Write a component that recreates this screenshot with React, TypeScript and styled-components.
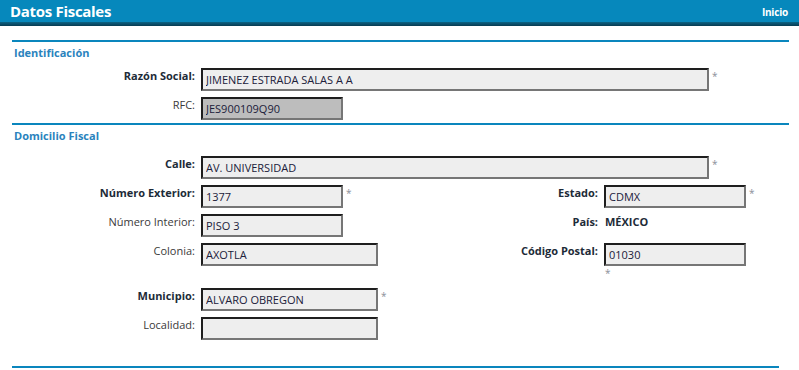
import React from "react";
import styled, { createGlobalStyle } from "styled-components";

const Global = createGlobalStyle`
  html, body { margin: 0; padding: 0; background: #ffffff; }
  body { font-family: "Open Sans", "DejaVu Sans", sans-serif; font-size: 11px; color: #333; }
`;

const Page = styled.div`
  width: 799px;
  height: 370px;
  overflow: hidden;
  background: #fff;
`;

const Header = styled.div`
  height: 26px;
  display: flex;
  align-items: flex-start;
  justify-content: space-between;
  padding: 0 11px 0 10px;
  box-sizing: border-box;
  background: linear-gradient(to bottom, #0688bc 0, #0688bc 22px, #0b6585 22px, #0a5877 23px, #073c52 26px);
`;

const Title = styled.h1`
  margin: 0;
  font-size: 15px;
  height: 22px;
  line-height: 22px;
  font-weight: 700;
  color: #fff;
  letter-spacing: -0.3px;
`;

const HomeLink = styled.a`
  font-size: 10px;
  font-weight: 700;
  height: 22px;
  line-height: 24px;
  color: #fff;
  text-decoration: none;
  letter-spacing: -0.2px;
`;

const Content = styled.div`
  padding: 14px 10px 0 12px;
`;

const Section = styled.section<{ $after?: number }>`
  border-top: 2px solid #0a86bd;
  padding-bottom: ${(p) => p.$after ?? 0}px;
`;

const SectionTitle = styled.h2<{ $below: number }>`
  margin: 0;
  padding: 3px 0 ${(p) => p.$below}px 2px;
  font-size: 11px;
  line-height: 16px;
  font-weight: 700;
  color: #2a83bd;
`;

const Rows = styled.div`
  display: flex;
  flex-direction: column;
  gap: 6px;
`;

const Row = styled.div`
  display: flex;
  align-items: flex-start;
  margin-left: -12px;
`;

const Half = styled.div`
  width: 403px;
  flex: none;
  display: flex;
  align-items: flex-start;
`;

const Label = styled.label<{ $bold?: boolean }>`
  width: 195px;
  flex: none;
  text-align: right;
  line-height: 16px;
  padding-right: 6px;
  font-weight: ${(p) => (p.$bold ? 700 : 400)};
  color: ${(p) => (p.$bold ? "#1d2b38" : "#3a3a3a")};
  white-space: nowrap;
`;

const Field = styled.div<{ $wrap?: boolean }>`
  display: flex;
  flex-wrap: ${(p) => (p.$wrap ? "wrap" : "nowrap")};
  align-items: flex-start;
`;

const Input = styled.input<{ $w: number; $grey?: boolean }>`
  box-sizing: border-box;
  width: ${(p) => p.$w}px;
  height: 23px;
  margin: 0;
  padding: 0 2px 0 3px;
  border-style: solid;
  border-width: 2px;
  border-color: #1e1e1e #767676 #767676 #1e1e1e;
  background: ${(p) => (p.$grey ? "#bdbdbd" : "#eeeeee")};
  font-family: "Open Sans", "DejaVu Sans", sans-serif;
  font-size: 11px;
  color: #20203a;
  outline: none;
`;

const Req = styled.span<{ $below?: boolean }>`
  font-size: 10px;
  line-height: 12px;
  color: #8a8f99;
  padding: ${(p) => (p.$below ? "1px 0 0 1px" : "2px 0 0 3px")};
  width: ${(p) => (p.$below ? "100%" : "auto")};
  height: ${(p) => (p.$below ? "16px" : "auto")};
  box-sizing: border-box;
`;

const Value = styled.span`
  line-height: 16px;
  font-weight: 700;
  color: #1d2b38;
  padding-left: 1px;
`;

const BottomRule = styled.div`
  margin-top: 26px;
  width: 767px;
  height: 2px;
  background: #0a86bd;
`;

export default function App() {
  return (
    <Page>
      <Global />
      <Header>
        <Title>Datos Fiscales</Title>
        <HomeLink href="#">Inicio</HomeLink>
      </Header>
      <Content>
        <Section $after={3}>
          <SectionTitle $below={7}>Identificación</SectionTitle>
          <Rows>
            <Row>
              <Label $bold>Razón Social:</Label>
              <Field>
                <Input $w={508} readOnly value="JIMENEZ ESTRADA SALAS A A" />
                <Req>*</Req>
              </Field>
            </Row>
            <Row>
              <Label>RFC:</Label>
              <Field>
                <Input $w={142} $grey readOnly value="JES900109Q90" />
              </Field>
            </Row>
          </Rows>
        </Section>
        <Section>
          <SectionTitle $below={12}>Domicilio Fiscal</SectionTitle>
          <Rows>
            <Row>
              <Label $bold>Calle:</Label>
              <Field>
                <Input $w={508} readOnly value="AV. UNIVERSIDAD" />
                <Req>*</Req>
              </Field>
            </Row>
            <Row>
              <Half>
                <Label $bold>Número Exterior:</Label>
                <Field>
                  <Input $w={142} readOnly value="1377" />
                  <Req>*</Req>
                </Field>
              </Half>
              <Half>
                <Label $bold>Estado:</Label>
                <Field>
                  <Input $w={142} readOnly value="CDMX" />
                  <Req>*</Req>
                </Field>
              </Half>
            </Row>
            <Row>
              <Half>
                <Label>Número Interior:</Label>
                <Field>
                  <Input $w={142} readOnly value="PISO 3" />
                </Field>
              </Half>
              <Half>
                <Label $bold>País:</Label>
                <Value>MÉXICO</Value>
              </Half>
            </Row>
            <Row>
              <Half>
                <Label>Colonia:</Label>
                <Field>
                  <Input $w={177} readOnly value="AXOTLA" />
                </Field>
              </Half>
              <Half>
                <Label $bold>Código Postal:</Label>
                <Field $wrap>
                  <Input $w={142} readOnly value="01030" />
                  <Req $below>*</Req>
                </Field>
              </Half>
            </Row>
            <Row>
              <Label $bold>Municipio:</Label>
              <Field>
                <Input $w={177} readOnly value="ALVARO OBREGON" />
                <Req>*</Req>
              </Field>
            </Row>
            <Row>
              <Label>Localidad:</Label>
              <Field>
                <Input $w={177} readOnly value="" />
              </Field>
            </Row>
          </Rows>
        </Section>
        <BottomRule />
      </Content>
    </Page>
  );
}
